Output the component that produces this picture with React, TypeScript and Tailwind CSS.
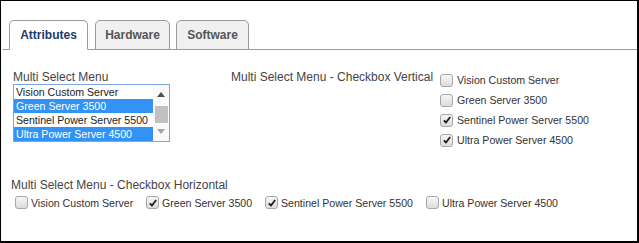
import React from "react";

const font = { fontFamily: '"Liberation Sans", Arial, sans-serif' };

function Box({ checked }: { checked: boolean }) {
  return (
    <span className="inline-flex h-[13px] w-[13px] shrink-0 items-center justify-center rounded-[3px] border border-[#a6a6a6] bg-gradient-to-b from-[#f7f7f7] to-[#dcdcdc]">
      {checked && (
        <svg viewBox="0 0 12 12" className="h-[10px] w-[10px]">
          <path d="M2.2 6.4 L4.8 9 L9.8 2.4" stroke="#1e1e1e" strokeWidth="2.2" fill="none" strokeLinejoin="round" />
        </svg>
      )}
    </span>
  );
}

const servers = [
  { name: "Vision Custom Server" },
  { name: "Green Server 3500" },
  { name: "Sentinel Power Server 5500" },
  { name: "Ultra Power Server 4500" },
];

export default function App() {
  const listSel = [false, true, false, true];
  const vertical = [false, false, true, true];
  const horizontal = [false, true, true, false];
  const hWidths = ["w-[131px]", "w-[119px]", "w-[161px]", "w-auto"];

  return (
    <div
      style={font}
      className="h-[243px] w-[639px] overflow-hidden border-l border-t border-r-2 border-b-2 border-black bg-white"
    >
      {/* tabs */}
      <div className="ml-[2px] flex items-end border-b border-[#9a9a9a] pl-[6px] pt-[19px]">
        <div className="-mb-px flex h-[30px] w-[79px] items-center justify-center rounded-t-[5px] border border-b-white border-[#9a9a9a] bg-white text-[12px] font-bold text-[#1c3a6b]">
          Attributes
        </div>
        <div className="-mb-px ml-[7px] flex h-[30px] w-[75px] items-center justify-center rounded-t-[5px] border border-[#9a9a9a] bg-[#f0f0f0] text-[12px] font-bold text-[#555]">
          Hardware
        </div>
        <div className="-mb-px ml-[6px] flex h-[30px] w-[73px] items-center justify-center rounded-t-[5px] border border-[#9a9a9a] bg-[#f0f0f0] text-[12px] font-bold text-[#555]">
          Software
        </div>
      </div>

      {/* top section */}
      <div className="mt-[20px] flex">
        <div className="ml-[12px] w-[218px]">
          <div className="h-[14px] text-[12px] leading-[14px] text-[#444]">Multi Select Menu</div>
          <div className="flex h-[58px] w-[157px] border border-[#7ea6de] bg-white">
            <div className="w-[139px]">
              {servers.map((s, i) => (
                <div
                  key={s.name}
                  className={`h-[14px] whitespace-nowrap pl-[2px] text-[10.6px] leading-[14px] ${
                    listSel[i] ? "bg-[#3393f5] text-white" : "text-[#222]"
                  }`}
                >
                  {s.name}
                </div>
              ))}
            </div>
            <div className="flex w-[16px] flex-col items-center bg-[#f9f9f9]">
              <svg viewBox="0 0 8 5" className="mt-[7px] h-[5px] w-[8px]">
                <path d="M0 5 L4 0 L8 5 Z" fill="#505050" />
              </svg>
              <div className="mt-[9px] h-[17px] w-[13px] bg-[#c1c1c1]" />
              <svg viewBox="0 0 8 5" className="mt-[6px] h-[5px] w-[8px]">
                <path d="M0 0 L4 5 L8 0 Z" fill="#a3a3a3" />
              </svg>
            </div>
          </div>
        </div>
        <div className="w-[209px] text-[12px] leading-[14px] text-[#444]">
          Multi Select Menu - Checkbox Vertical
        </div>
        <div className="flex flex-col">
          {servers.map((s, i) => (
            <div key={s.name} className="flex h-[20px] items-center gap-[4px]">
              <Box checked={vertical[i]} />
              <span className="mt-[2px] whitespace-nowrap text-[10.6px] text-[#333]">{s.name}</span>
            </div>
          ))}
        </div>
      </div>

      {/* horizontal section */}
      <div className="ml-[10px] mt-[28px] text-[12px] leading-[14px] text-[#444]">
        Multi Select Menu - Checkbox Horizontal
      </div>
      <div className="ml-[14px] mt-[1px] flex h-[20px] items-center">
        {servers.map((s, i) => (
          <div key={s.name} className={`flex shrink-0 items-center gap-[3px] ${hWidths[i]}`}>
            <Box checked={horizontal[i]} />
            <span className="mt-[1px] whitespace-nowrap text-[10.6px] text-[#333]">{s.name}</span>
          </div>
        ))}
      </div>
    </div>
  );
}
